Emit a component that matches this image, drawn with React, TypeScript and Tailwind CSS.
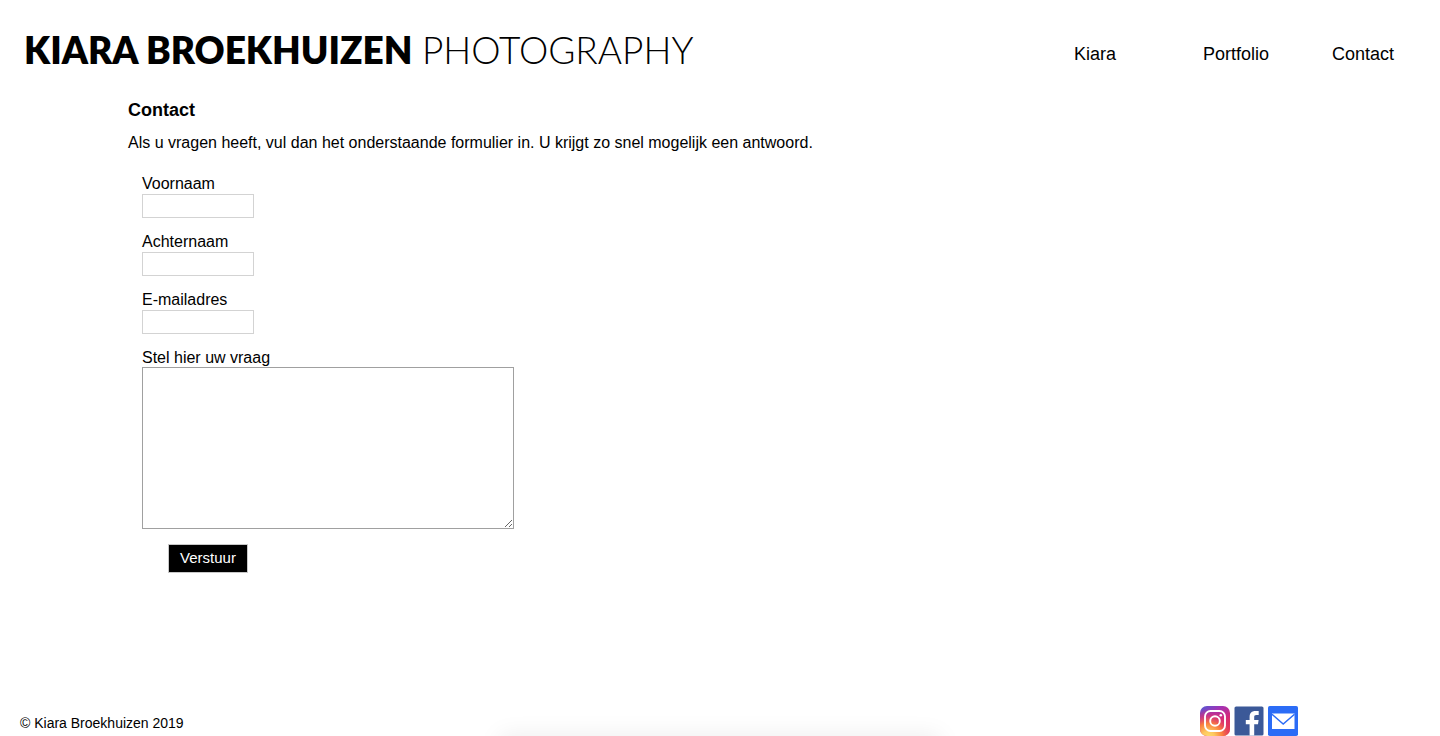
import React from "react";

const navItems = ["Kiara", "Portfolio", "Contact"];

const fields = [
  { id: "voornaam", label: "Voornaam", type: "text" },
  { id: "achternaam", label: "Achternaam", type: "text" },
  { id: "email", label: "E-mailadres", type: "email" },
];

function InstagramLogo() {
  return (
    <svg viewBox="0 0 30 30" className="size-[30px]" aria-hidden="true">
      <defs>
        <linearGradient id="ig-base" x1="0" y1="0" x2="0.7" y2="1">
          <stop offset="0" stopColor="#4f5bd5" />
          <stop offset="0.35" stopColor="#a233b5" />
          <stop offset="0.7" stopColor="#d62976" />
          <stop offset="1" stopColor="#e8433f" />
        </linearGradient>
        <radialGradient id="ig-glow" cx="0.28" cy="1.05" r="0.95">
          <stop offset="0" stopColor="#ffdd70" />
          <stop offset="0.22" stopColor="#fdc95f" />
          <stop offset="0.5" stopColor="#fa7e3e" />
          <stop offset="0.78" stopColor="#e0346b" stopOpacity="0.6" />
          <stop offset="1" stopColor="#d62976" stopOpacity="0" />
        </radialGradient>
      </defs>
      <rect width="30" height="30" rx="7" fill="url(#ig-base)" />
      <rect width="30" height="30" rx="7" fill="url(#ig-glow)" />
      <rect x="5" y="5" width="20" height="20" rx="5.5" fill="none" stroke="#fff" strokeWidth="1.9" />
      <circle cx="15" cy="15" r="4.8" fill="none" stroke="#fff" strokeWidth="1.9" />
      <circle cx="20.8" cy="9.2" r="1.3" fill="#fff" />
    </svg>
  );
}

function FacebookLogo() {
  return (
    <svg viewBox="0 0 30 30" className="size-[30px]" aria-hidden="true">
      <rect x="0.5" y="0.5" width="29" height="29" rx="1.6" fill="#3b5998" />
      <path
        d="M20.2 29.5V18.3h3.8l.6-4.4h-4.4v-2.8c0-1.3.4-2.1 2.2-2.1h2.3V5.1c-.4-.1-1.8-.2-3.4-.2-3.4 0-5.7 2.1-5.7 5.8v3.2h-3.8v4.4h3.8v11.2z"
        fill="#fff"
      />
    </svg>
  );
}

function MailLogo() {
  return (
    <svg viewBox="0 0 30 30" className="size-[30px]" aria-hidden="true">
      <rect width="30" height="30" rx="1.8" fill="#2b6cf6" />
      <rect x="4" y="7.5" width="22.5" height="15.5" fill="#fff" />
      <path d="M4 8.3 15.2 18 26.5 8.3" fill="none" stroke="#2b6cf6" strokeWidth="1.5" />
    </svg>
  );
}

const socials = [
  { name: "Instagram", Logo: InstagramLogo },
  { name: "Facebook", Logo: FacebookLogo },
  { name: "E-mail", Logo: MailLogo },
];

export default function App() {
  return (
    <div className="relative flex min-h-screen flex-col overflow-hidden bg-white font-['Liberation_Sans',Arial,sans-serif] text-base text-black">
      <header className="flex items-center justify-between pt-6 pl-6">
        <a href="#" className="font-[Lato,sans-serif] text-[37px] leading-[52px] whitespace-nowrap">
          <span className="font-extrabold">KIARA BROEKHUIZEN</span> <span className="font-light">PHOTOGRAPHY</span>
        </a>
        <nav className="pt-2">
          <ul className="grid grid-cols-[129px_129px_108px] text-lg">
            {navItems.map((item) => (
              <li key={item}>
                <a href="#">{item}</a>
              </li>
            ))}
          </ul>
        </nav>
      </header>

      <main className="flex-1 px-32 pt-5">
        <h1 className="text-lg leading-7 font-bold">Contact</h1>
        <p className="mt-2 leading-[22px]">
          Als u vragen heeft, vul dan het onderstaande formulier in. U krijgt zo snel mogelijk een antwoord.
        </p>

        <form className="mt-[21px] flex flex-col items-start gap-[15px] pl-3.5" onSubmit={(e) => e.preventDefault()}>
          {fields.map((f) => (
            <div key={f.id} className="flex flex-col">
              <label htmlFor={f.id} className="pb-px leading-[18px]">
                {f.label}
              </label>
              <input id={f.id} type={f.type} className="h-6 w-28 border border-[#d3d3d3] px-1 text-sm" />
            </div>
          ))}
          <div className="flex flex-col">
            <label htmlFor="vraag" className="leading-[18px]">
              Stel hier uw vraag
            </label>
            <textarea id="vraag" className="h-[162px] w-[372px] resize border border-[#a0a0a0] p-1 text-sm" />
          </div>
          <button type="submit" className="ml-[26px] h-[29px] w-20 border border-[#c8c8c8] bg-black text-[15px] text-white">
            Verstuur
          </button>
        </form>
      </main>

      <footer className="flex items-end justify-between pr-[142px] pl-5">
        <p className="text-sm leading-[26px]">© Kiara Broekhuizen 2019</p>
        <ul className="flex gap-1">
          {socials.map(({ name, Logo }) => (
            <li key={name}>
              <a href="#" aria-label={name} className="block">
                <Logo />
              </a>
            </li>
          ))}
        </ul>
      </footer>
      <div className="pointer-events-none absolute top-full left-1/2 h-6 w-[440px] -translate-x-1/2 shadow-[0_0_24px_rgba(0,0,0,0.08)]" />
    </div>
  );
}
